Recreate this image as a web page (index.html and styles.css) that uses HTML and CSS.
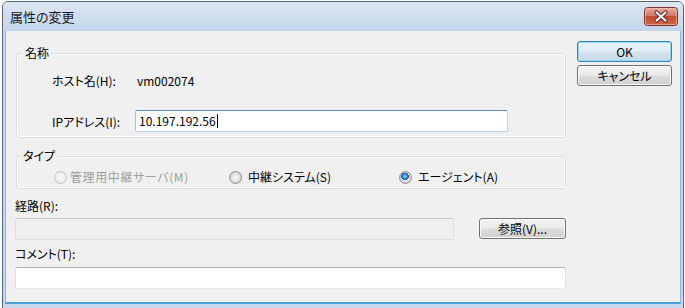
FILE: index.html
```html
<!DOCTYPE html>
<html lang="ja">
<head>
<meta charset="utf-8">
<title>属性の変更</title>
<link rel="stylesheet" href="styles.css">
</head>
<body>
<div class="window">
  <div class="titlebar">
    <span class="title">属性の変更</span>
    <div class="close">
      <svg width="34" height="19" viewBox="0 0 34 19">
        <defs>
          <linearGradient id="cg" x1="0" y1="0" x2="0" y2="1">
            <stop offset="0" stop-color="#e9b1a4"/>
            <stop offset="0.45" stop-color="#d47a66"/>
            <stop offset="0.5" stop-color="#c34a30"/>
            <stop offset="1" stop-color="#d0654a"/>
          </linearGradient>
        </defs>
        <rect x="0.5" y="0.5" width="33" height="18" rx="3" fill="url(#cg)" stroke="#7d3327"/>
        <rect x="1.5" y="1.5" width="31" height="16" rx="2" fill="none" stroke="#f0c8bd" stroke-opacity="0.6"/>
        <path d="M12.5 5.5 L21.5 13.5 M21.5 5.5 L12.5 13.5" stroke="#5a2a22" stroke-width="4.2" stroke-linecap="round"/>
        <path d="M12.5 5.5 L21.5 13.5 M21.5 5.5 L12.5 13.5" stroke="#ffffff" stroke-width="2.2" stroke-linecap="round"/>
      </svg>
    </div>
  </div>
  <div class="client">
    <div class="main">
      <div class="group group-name">
        <span class="legend legend-name">名称</span>
        <div class="row">
          <span class="row-label">ホスト名(H):</span>
          <span class="value">vm002074</span>
        </div>
        <div class="row row-ip">
          <span class="row-label">IPアドレス(I):</span>
          <div class="textbox textbox-focus ip">10.197.192.56<span class="caret"></span></div>
        </div>
      </div>
      <div class="group group-type">
        <span class="legend legend-type">タイプ</span>
        <div class="radio-item radio-1 disabled"><span class="radio"></span><span class="radio-text">管理用中継サーバ(M)</span></div>
        <div class="radio-item radio-2"><span class="radio"></span><span class="radio-text">中継システム(S)</span></div>
        <div class="radio-item radio-3"><span class="radio checked"></span><span class="radio-text">エージェント(A)</span></div>
      </div>
      <div class="field-label label-path">経路(R):</div>
      <div class="path-row">
        <div class="textbox textbox-disabled path"></div>
        <div class="button browse">参照(V)...</div>
      </div>
      <div class="field-label label-comment">コメント(T):</div>
      <div class="textbox comment"></div>
    </div>
    <div class="side">
      <div class="button button-default">OK</div>
      <div class="button button-cancel">キャンセル</div>
    </div>
  </div>
</div>
</body>
</html>
```
FILE: styles.css
```css
html, body {
  margin: 0;
  padding: 0;
  background: #ffffff;
  overflow: hidden;
}

body {
  font-family: "Noto Sans CJK JP", "Noto Sans", sans-serif;
  font-size: 12px;
  color: #000;
  font-feature-settings: "palt" 1;
}

.window {
  margin: 1px 0 0 2px;
  width: 680px;
  height: 320px;
  border: 1px solid #56657a;
  border-radius: 6px 6px 0 0;
  background: #c9d9ed;
}

.titlebar {
  height: 29px;
  display: flex;
  align-items: flex-start;
  border-radius: 5px 5px 0 0;
  background: linear-gradient(#dde7f4 0%, #d0ddee 50%, #c4d5ea 100%);
}

.title {
  margin-left: 7px;
  line-height: 29px;
  font-size: 13px;
  color: #1b1b1b;
}

.close {
  margin: 5px 5px 0 auto;
  width: 34px;
  height: 19px;
}

.close svg {
  display: block;
}

.client {
  margin: 0 2px;
  height: 271px;
  border: 1px solid #8db6dc;
  border-top: none;
  border-bottom: 2px solid #4aa3d8;
  background: #f0f0f0;
  display: flex;
  align-items: flex-start;
}

.main {
  margin-left: 9px;
  width: 551px;
  padding-top: 22px;
  display: flex;
  flex-direction: column;
}

.side {
  margin-left: 11px;
  width: 95px;
  padding-top: 10px;
  display: flex;
  flex-direction: column;
  gap: 3px;
}

/* Group boxes */
.group {
  position: relative;
  box-sizing: border-box;
  margin-left: 1px;
  width: 550px;
  border: 1px solid #d5dfe5;
  border-radius: 3px;
  box-shadow: inset 0 0 0 1px #ffffff;
}

.legend {
  position: absolute;
  top: -9px;
  line-height: 16px;
  padding: 0 2px;
  background: #f0f0f0;
}

.legend-name { left: 6px; }
.legend-type { left: 4px; }

.group-name {
  height: 85px;
  padding: 15px 0 0 35px;
  display: flex;
  flex-direction: column;
  gap: 19px;
}

.row {
  height: 22px;
  display: flex;
  align-items: center;
}

.row-label {
  width: 83px;
}

.value {
  padding-left: 2px;
}

/* Text boxes */
.textbox {
  box-sizing: border-box;
  height: 22px;
  line-height: 20px;
  padding: 0 3px;
  background: #ffffff;
  border: 1px solid #dbdfe6;
  border-top-color: #abadb3;
  border-bottom-color: #e3e9ef;
  border-radius: 2px;
}

.textbox-focus {
  border-color: #b7d4ef;
  border-top-color: #5d8fc0;
  border-left-color: #9fc1e4;
}

.textbox-disabled {
  background: #f0f0f0;
  border-color: #d9dee5;
  border-top-color: #c5cad1;
}

.ip {
  width: 373px;
  display: flex;
  align-items: center;
}

.caret {
  display: inline-block;
  width: 1px;
  height: 14px;
  margin-left: 1px;
  background: #000;
}

/* Radio group */
.group-type {
  height: 33px;
  margin-top: 18px;
  padding: 9px 0 0 37px;
  display: flex;
  align-items: center;
  align-content: flex-start;
}

.radio-item {
  height: 16px;
  display: flex;
  align-items: center;
}

.radio-1 { width: 175px; }
.radio-2 { width: 170px; }

.radio {
  box-sizing: border-box;
  width: 13px;
  height: 13px;
  border-radius: 50%;
  border: 1px solid #8f8f8f;
  background: radial-gradient(circle at 50% 50%, #f6f6f6 0%, #e6e6e6 45%, #cfcfcf 70%, #f4f4f4 100%);
  flex: none;
}

.radio.checked {
  background:
    radial-gradient(circle at 45% 40%, #9fd4f8 0%, #2d8ad6 25%, #114f92 42%, rgba(0,0,0,0) 44%),
    radial-gradient(circle at 50% 50%, #f6f6f6 0%, #e6e6e6 45%, #cfcfcf 70%, #f4f4f4 100%);
}

.disabled .radio {
  border-color: #c6c6c6;
  background: radial-gradient(circle at 50% 50%, #fafafa 0%, #f0f0f0 50%, #e3e3e3 75%, #f8f8f8 100%);
}

.radio-text {
  margin-left: 4px;
  line-height: 16px;
}

.radio-1 .radio-text {
  margin-left: 3px;
  letter-spacing: 0.6px;
}

.radio-2 .radio-text,
.radio-3 .radio-text {
  margin-left: 6px;
}

.disabled .radio-text {
  color: #9d9d9d;
}

/* Lower fields */
.field-label {
  height: 16px;
  line-height: 16px;
}

.label-path { margin-top: 9px; }
.label-comment { margin-top: 6px; }

.path-row {
  margin-top: 4px;
  display: flex;
  align-items: flex-start;
}

.path {
  width: 439px;
}

.comment {
  margin-top: 5px;
  width: 551px;
}

/* Buttons */
.button {
  box-sizing: border-box;
  height: 21px;
  line-height: 19px;
  text-align: center;
  border: 1px solid #707070;
  border-radius: 3px;
  background: linear-gradient(#f2f2f2 0%, #ebebeb 48%, #dddddd 52%, #cfcfcf 100%);
  box-shadow: inset 0 0 0 1px #fbfbfb;
}

.browse {
  width: 87px;
  margin-left: 25px;
}

.button-default {
  border-color: #3c7fb1;
  box-shadow: inset 0 0 0 1px #8fdcf8;
  background: linear-gradient(#eaf5fb 0%, #e2eef6 48%, #d3e3ee 52%, #c8d8e6 100%);
}
```
